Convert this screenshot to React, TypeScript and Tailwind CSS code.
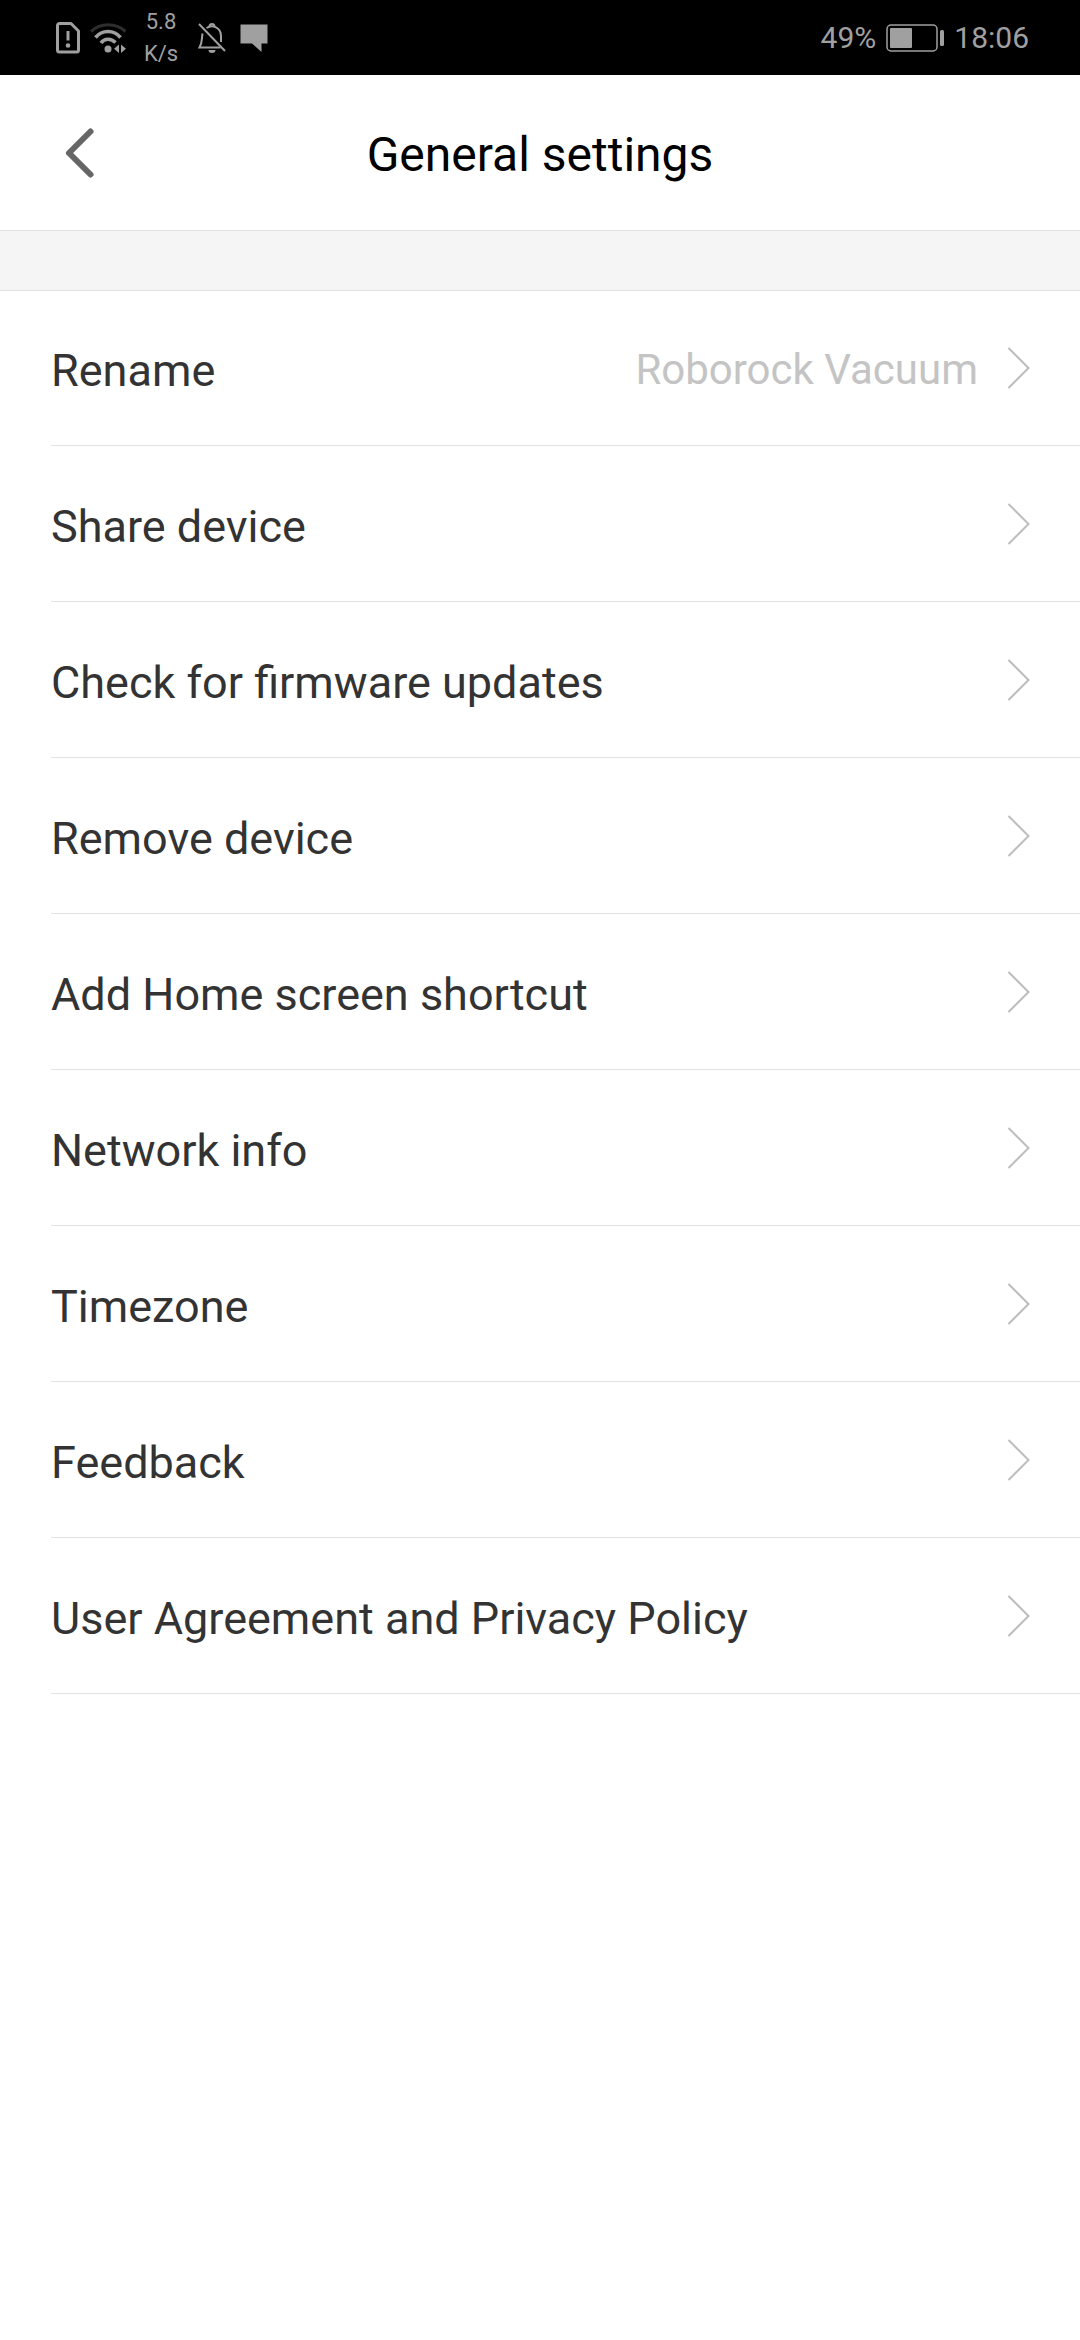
const items = [
  { label: "Rename", value: "Roborock Vacuum" },
  { label: "Share device" },
  { label: "Check for firmware updates" },
  { label: "Remove device" },
  { label: "Add Home screen shortcut" },
  { label: "Network info" },
  { label: "Timezone" },
  { label: "Feedback" },
  { label: "User Agreement and Privacy Policy" },
];

const SimAlertIcon = () => (
  <svg className="w-6 h-8" viewBox="0 0 24 32" fill="none" stroke="currentColor">
    <path d="M3.5 1.5h11.500L22.500 9v19a2 2 0 0 1-2 2h-17a2 2 0 0 1-2-2V3.500a2 2 0 0 1 2-2z" strokeWidth="3" strokeLinejoin="round" />
    <path d="M12 9v9.500" strokeWidth="3" />
    <circle cx="12" cy="23.500" r="2.300" fill="currentColor" stroke="none" />
  </svg>
);

const WifiIcon = () => (
  <svg className="w-9 h-8" viewBox="0 0 36 32" fill="none" stroke="currentColor">
    <path d="M1 9.500C10.500 0.500 26 0.500 35.500 9.500" stroke="#2e2e2e" strokeWidth="3.200" />
    <path d="M5.500 15.500C12 7.500 24 7.500 30.500 15.500" strokeWidth="3.600" />
    <path d="M11 21C14.500 16 21 16 25.500 20.500" strokeWidth="3.600" />
    <circle cx="18" cy="27" r="3.500" fill="currentColor" stroke="none" />
    <path d="M29 22.500v8.500l-5-4.250zM31 22.500v8.500l5-4.250z" fill="currentColor" stroke="none" />
  </svg>
);

const BellOffIcon = () => (
  <svg className="w-7 h-8" viewBox="0 0 28 32" fill="none" stroke="currentColor" strokeWidth="2">
    <path d="M1 2l26 27" />
    <path d="M4.500 11.500C3.500 17 4.500 20.500 1.500 25.500H22.500" />
    <path d="M8.500 6C14.500 2 23 5.500 23 14v6" />
    <path d="M11.500 4.500a2.500 2.500 0 0 1 5 0" />
    <path d="M10.500 28h7a3.500 3 0 0 1-7 0z" fill="currentColor" stroke="none" />
  </svg>
);

const MessageIcon = () => (
  <svg className="w-7 h-7" viewBox="0 0 28 28" fill="currentColor">
    <path d="M0.500 0.500h27v19h-6V28l-9.500-8.500H0.500z" />
  </svg>
);

const BatteryIcon = () => (
  <svg className="w-[58px] h-7" viewBox="0 0 58 28" fill="none" stroke="currentColor">
    <rect x="1" y="1" width="50" height="26" rx="4" strokeWidth="1.500" />
    <rect x="4" y="4" width="22" height="20" rx="1" fill="currentColor" stroke="none" />
    <rect x="54" y="6" width="4" height="16" rx="1.500" fill="currentColor" stroke="none" />
  </svg>
);

const StatusBar = () => (
  <div className="h-[75px] bg-black text-[#a0a0a0] flex items-center justify-between pl-14 pr-[51px]">
    <div className="flex items-center">
      <SimAlertIcon />
      <div className="ml-[10px]">
        <WifiIcon />
      </div>
      <div className="w-[50px] ml-[10px] text-[22px] leading-8 text-center">
        <div>5.8</div>
        <div>K/s</div>
      </div>
      <div className="ml-3">
        <BellOffIcon />
      </div>
      <div className="ml-[14px]">
        <MessageIcon />
      </div>
    </div>
    <div className="flex items-center text-[30px] leading-8">
      <span>49%</span>
      <div className="mx-[10px]">
        <BatteryIcon />
      </div>
      <span>18:06</span>
    </div>
  </div>
);

const App = () => {
  return (
    <div className="min-h-screen bg-white font-['Roboto',sans-serif]">
      <StatusBar />

      {/* Header */}
      <header className="h-[155px] grid grid-cols-[160px_1fr_160px] items-center">
        <button type="button" aria-label="Back" className="h-full pl-16">
          <svg className="w-8 h-14" viewBox="0 0 32 56" fill="none" stroke="#666666" strokeWidth="6" strokeLinecap="round" strokeLinejoin="round">
            <path d="M26.500 6.500L5 28l21.500 21.500" />
          </svg>
        </button>
        <h1 className="pt-1 text-center text-[48px] leading-14 text-black">General settings</h1>
      </header>

      <div className="h-[60px] bg-[#f5f5f5] border-t border-[#e2e2e2]" />

      {/* Settings list */}
      <ul>
        {items.map((item) => (
          <li key={item.label} className="h-[156px] border-[#e2e2e2] first:border-t">
            <button type="button" className="block w-full h-full pl-[51px]">
              <span className="flex items-center h-full pr-[50px] border-b border-[#e2e2e2] text-left">
                <span className="flex-1 pt-[6px] text-[45px] leading-14 text-[#333333]">{item.label}</span>
                {item.value && <span className="pt-1 mr-7 text-[42px] leading-14 text-[#c4c4c4]">{item.value}</span>}
                <svg className="w-6 h-11" viewBox="0 0 24 44" fill="none" stroke="#bdbdbd" strokeWidth="2">
                  <path d="M2.500 2L22.500 22L2.500 42" />
                </svg>
              </span>
            </button>
          </li>
        ))}
      </ul>
    </div>
  );
};

export default App;
